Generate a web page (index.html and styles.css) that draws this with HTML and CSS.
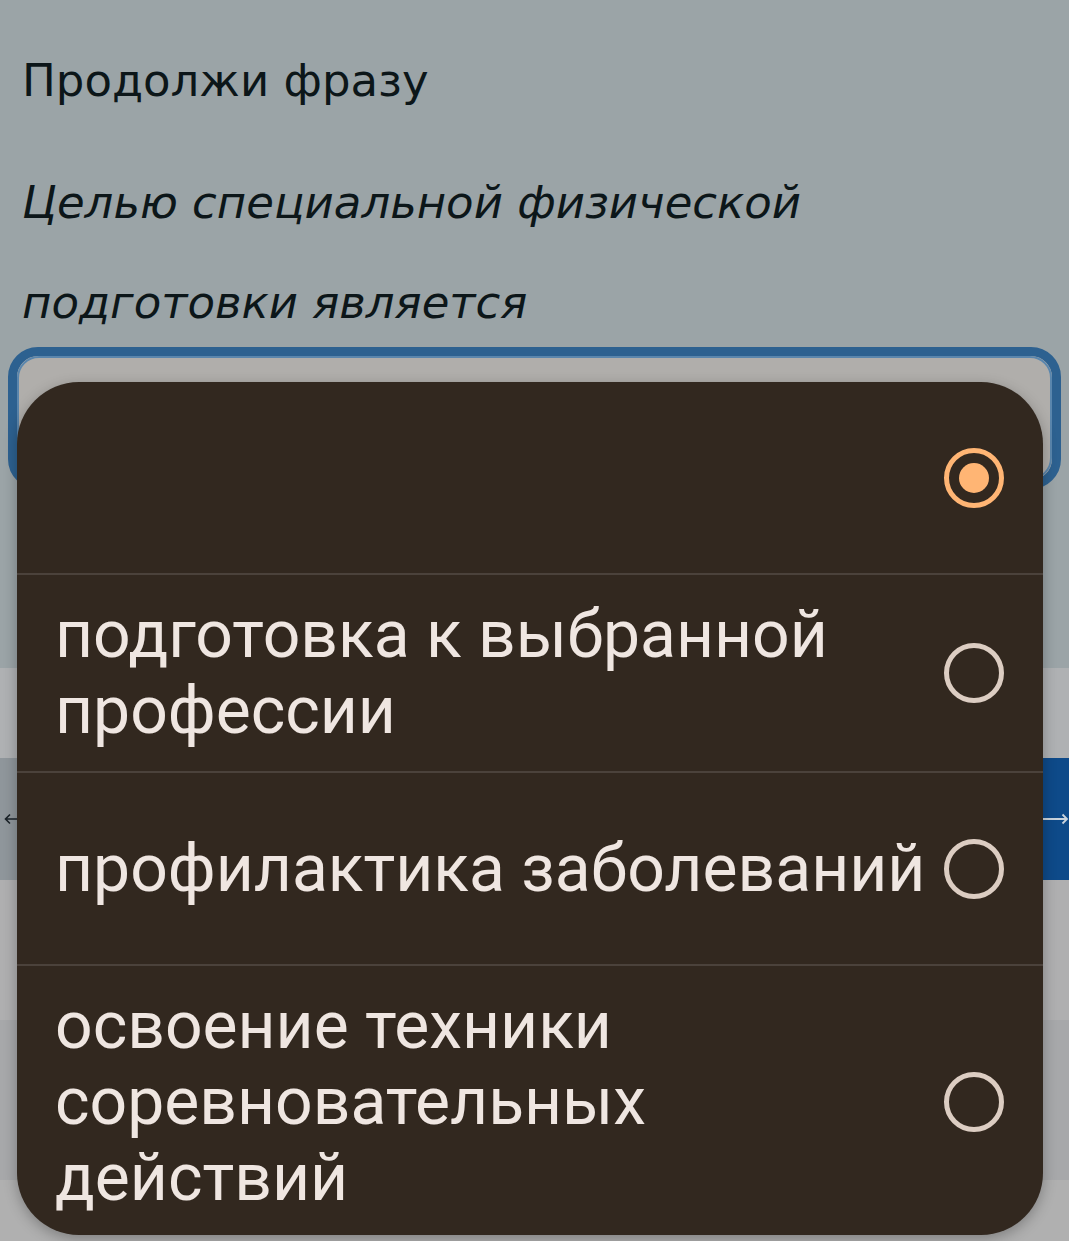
FILE: index.html
```html
<!DOCTYPE html>
<html lang="ru">
<head>
<meta charset="utf-8">
<title>Продолжи фразу</title>
<link rel="stylesheet" href="styles.css">
</head>
<body>
<div class="page">
  <section class="question">
    <h1 class="title">Продолжи фразу</h1>
    <p class="phrase">Целью специальной физической</p>
    <p class="phrase">подготовки является</p>
    <div class="select"><div class="select-inner"></div></div>
  </section>
  <div class="band band-a"></div>
  <nav class="nav">
    <div class="nav-btn nav-back">
      <svg class="arrow" width="14" height="12" viewBox="0 0 14 12"><path d="M13 6H2M6 1.5L1.5 6L6 10.5" fill="none" stroke="#1a2228" stroke-width="1.6"/></svg>
    </div>
    <div class="nav-btn nav-next">
      <svg class="arrow" width="28" height="12" viewBox="0 0 28 12"><path d="M0 6H26M21.5 1.5L26 6L21.5 10.5" fill="none" stroke="#c9d3dc" stroke-width="1.8"/></svg>
    </div>
  </nav>
  <div class="band band-b"></div>
  <div class="band band-c"></div>
  <div class="band band-d"></div>

  <div class="dropdown" role="listbox">
    <div class="option">
      <span class="label"></span>
      <span class="radio radio-on"><span class="dot"></span></span>
    </div>
    <div class="option">
      <span class="label">подготовка к выбранной профессии</span>
      <span class="radio"></span>
    </div>
    <div class="option">
      <span class="label">профилактика заболеваний</span>
      <span class="radio"></span>
    </div>
    <div class="option option-last">
      <span class="label">освоение техники соревновательных действий</span>
      <span class="radio"></span>
    </div>
  </div>
</div>
</body>
</html>
```
FILE: styles.css
```css
* { box-sizing: border-box; }
html, body { margin: 0; padding: 0; }
body {
  width: 1069px;
  height: 1241px;
  overflow: hidden;
  background: #9ba4a7;
}
.page {
  position: relative;
  width: 1069px;
  height: 1241px;
  display: flex;
  flex-direction: column;
}
.question {
  background: #9ba4a7;
  height: 668px;
  padding: 49px 8px 0 8px;
  font-family: "DejaVu Sans", "Noto Sans", sans-serif;
  color: #0c1619;
}
.title {
  margin: 0 0 0 14px;
  font-weight: 400;
  font-size: 45px;
  line-height: 64px;
}
.phrase {
  margin: 58px 0 0 14px;
  font-style: italic;
  font-size: 45px;
  line-height: 64px;
}
.phrase + .phrase { margin-top: 36px; }
.select {
  margin-top: 12px;
  height: 142px;
  border: 9px solid #2d6190;
  border-radius: 30px;
  background: #b0aeab;
}
.select-inner {
  height: 100%;
  border: 2px solid #5a86ad;
  border-radius: 22px;
}
.band { width: 100%; }
.band-a { height: 90px; background: #afb1b3; }
.nav { display: flex; height: 122px; }
.nav-btn { flex: 1; display: flex; align-items: center; }
.nav-back { background: #8f969b; justify-content: flex-start; padding-left: 4px; }
.nav-next { background: #0e4a89; justify-content: flex-end; }
.arrow { display: block; }
.band-b { height: 140px; background: #afafb0; }
.band-c { height: 160px; background: #a7a8aa; }
.band-d { height: 61px; background: #b0b0b0; }

.dropdown {
  position: absolute;
  left: 17px;
  top: 382px;
  width: 1026px;
  height: 853px;
  background: #32281f;
  border-radius: 62px;
  overflow: hidden;
  box-shadow: 0 4px 14px rgba(0, 0, 0, 0.28);
  font-family: Roboto, "Noto Sans", sans-serif;
  color: #efe6e1;
}
.option {
  min-height: 193px;
  display: flex;
  align-items: center;
  gap: 18px;
  padding: 22px 39px 22px 38px;
  border-bottom: 2px solid #4b423b;
}
.option-last { border-bottom: 0; }
.label {
  flex: 1;
  font-size: 66px;
  line-height: 76px;
}
.radio {
  flex: 0 0 60px;
  width: 60px;
  height: 60px;
  border: 5px solid #dccdc2;
  border-radius: 50%;
  display: flex;
  align-items: center;
  justify-content: center;
}
.radio-on { border-color: #ffb574; }
.dot {
  width: 30px;
  height: 30px;
  border-radius: 50%;
  background: #ffb574;
}
```
